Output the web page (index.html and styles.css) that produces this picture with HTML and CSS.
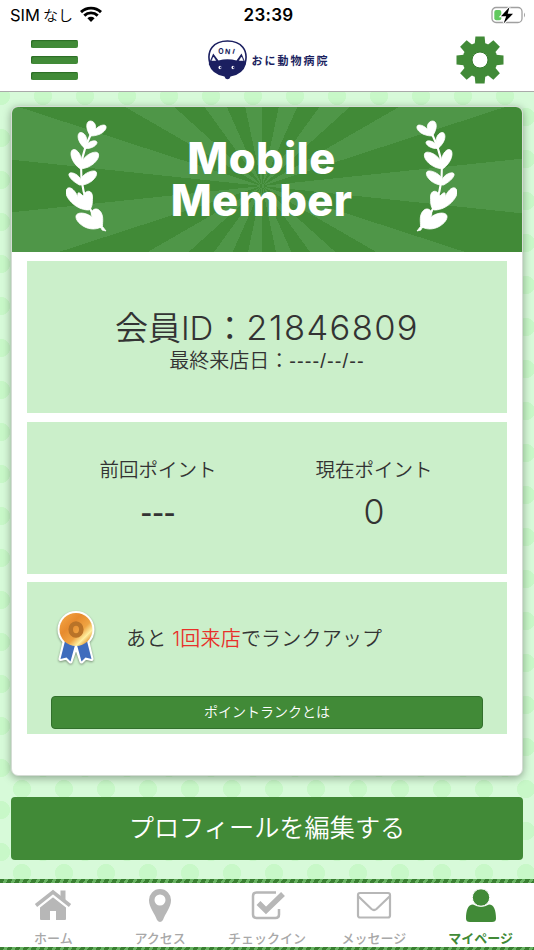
FILE: index.html
```html
<!DOCTYPE html>
<html lang="ja">

<head>
  <meta charset="utf-8">
  <title>マイページ</title>
  <meta name="viewport" content="width=device-width, initial-scale=1">
  <link rel="stylesheet" href="styles.css">
</head>

<body>
  <div class="status">
    <div class="carrier"><span class="latin">SIM</span><span class="nashi">なし</span>
      <svg width="22" height="17" viewBox="0 0 22 17">
        <path d="M1 6.1a14.5 14.5 0 0 1 20 0M4.3 9.6a9.7 9.7 0 0 1 13.4 0" fill="none" stroke="#000" stroke-width="2.9" />
        <path d="M11 16l3.6-3.7a5.2 5.2 0 0 0-7.2 0z" />
      </svg>
    </div>
    <div class="clock">23:39</div>
    <svg class="battery" width="36" height="18" viewBox="0 0 36 18">
      <rect x="1" y="1.5" width="30" height="15" rx="4" fill="#fff" stroke="#a0a0a0" stroke-width="1.3" />
      <path d="M33 6.5q2 2.5 0 5z" fill="#a0a0a0" />
      <rect x="3.3" y="4" width="7" height="10.3" rx="2" fill="#62c95f" />
      <path d="M18.500 1L10 10.200h5.200L12.600 17.500 22 7.700h-5.300z" stroke="#fff" stroke-width="2" paint-order="stroke" />
    </svg>
  </div>

  <header class="header">
    <div class="menu"><i></i><i></i><i></i></div>
    <div class="logo">
      <svg width="41" height="40" viewBox="0 0 41 40">
        <path d="M3 24C-1 10 7 1 20.500 1S42 10 38 24" fill="#fff" stroke="#1b1f60" stroke-width="1.600" />
        <path d="M1.700 24L6.200 13.500 11.500 20.500Q20.500 18 29.500 20.500L34.500 13.500 39 24Q36 34.500 23.500 36.500L22.500 38.500Q20.500 40 18.500 38.500L17.500 36.500Q5 34.500 1.700 24z" fill="#1b1f60" />
        <path d="M4.800 20.500L6.500 17l2.200 3.500zM36.200 20.500L34.500 17l-2.200 3.500z" fill="#fff" stroke="#fff" stroke-width=".5" />
        <ellipse cx="13" cy="27.500" rx="1.500" ry="1.700" fill="#fff" />
        <ellipse cx="26" cy="27.500" rx="1.500" ry="1.700" fill="#fff" />
        <circle cx="13.800" cy="27.500" r=".9" fill="#1b1f60" />
        <circle cx="26.800" cy="27.500" r=".9" fill="#1b1f60" />
        <g class="oni">
          <text x="11.300" y="14.200">O</text>
          <text x="18" y="14" transform="rotate(6 20 12)">N</text>
          <text x="25.500" y="14" transform="rotate(16 27 12)">I</text>
        </g>
      </svg>
      <span>おに動物病院</span>
    </div>
    <svg class="gear" width="48" height="48" viewBox="-24 -24 48 48">
      <defs>
        <path id="tooth" d="M-5.500-14L-4.600-23.500H4.600L5.500-14z" />
      </defs>
      <g fill="#418a37">
        <use href="#tooth" />
        <use href="#tooth" transform="rotate(45)" />
        <use href="#tooth" transform="rotate(90)" />
        <use href="#tooth" transform="rotate(135)" />
        <use href="#tooth" transform="rotate(180)" />
        <use href="#tooth" transform="rotate(225)" />
        <use href="#tooth" transform="rotate(270)" />
        <use href="#tooth" transform="rotate(315)" />
        <circle r="17.500" />
      </g>
      <circle r="8" fill="#fff" stroke="#347a2c" />
    </svg>
  </header>

  <main class="main">
    <div class="card">
      <div class="banner">
        <svg class="laurel" width="42" height="112" viewBox="0 0 42 112">
          <g id="branch">
            <path d="M25 14Q13 37 15.500 60T35 108" fill="none" stroke="#fff" stroke-width="2.200" />
            <path d="M24.500 16C19 8 20 1 24.500 1S32 8 27.500 13C30 6 39 3 40 6.500S35 16 24.500 16z
              M19 28.500C10 21 11 12 15 12.500S22 18 20.500 25C24 20 31 20 31 22.500S26 29 19 28.500z
              M14.500 49C4 42 3 30 7.500 29.500S16 37 16 43C17 35 31 29 32.500 34S26 48 14.500 49z
              M13.500 65C4 60 1 54 4 53S13 55 15 60C15 54 29 48 30.500 52.500S23 66 13.500 65z
              M22.500 90C9 90 -2 76 0 70.500S8 68 12 77C11 70 14 73 17 76C20 69 26.500 70 26.500 77S26 89 22.500 90z
              M35 107C24 113 11 104 10 97.500S21 92 27 98C22 92 29 86 33.500 90.500S36.500 101 36.500 106.500L40 111 36 110z" fill="#fff" stroke="#fff" stroke-width=".8" />
          </g>
        </svg>
        <h1>Mobile<br>Member</h1>
        <svg class="laurel" width="42" height="112" viewBox="0 0 42 112">
          <use href="#branch" transform="matrix(-1 0 0 1 42 0)" />
        </svg>
      </div>

      <div class="sections">
        <section class="box member">
          <p class="member-id">会員ID：<span>21846809</span></p>
          <p class="last-visit">最終来店日：<span>----/--/--</span></p>
        </section>

        <section class="box points">
          <div>
            <p class="label">前回ポイント</p>
            <p class="value dashes">---</p>
          </div>
          <div>
            <p class="label">現在ポイント</p>
            <p class="value">0</p>
          </div>
        </section>

        <section class="box rank">
          <div class="rank-row">
            <svg class="medal" width="40" height="54" viewBox="0 0 40 54">
              <defs>
                <linearGradient id="gold" x1="0" y1="0" x2="1" y2="1">
                  <stop offset="0" stop-color="#f7ab4a" />
                  <stop offset=".35" stop-color="#e78b2e" />
                  <stop offset=".6" stop-color="#efa443" />
                  <stop offset=".75" stop-color="#fff0a0" />
                  <stop offset=".85" stop-color="#e9a94a" />
                  <stop offset="1" stop-color="#dd8d35" />
                </linearGradient>
              </defs>
              <g stroke="#fff" stroke-width="4" stroke-linejoin="round">
                <path d="M9 29L4.500 48l6-1.500 4 4L20 34l5.500 16.500 4-4 6 1.500L31 29z" fill="#fff" />
                <circle cx="20" cy="18.500" r="16.500" />
              </g>
              <path d="M9 30L4.500 48l6-1.500 4 4L19.300 33zM31 30l4.500 18-6-1.500-4 4L20.700 33z" fill="#3f6cbd" />
              <circle cx="20" cy="18.500" r="16.500" fill="url(#gold)" />
              <ellipse cx="20" cy="18.500" rx="5.300" ry="6" fill="none" stroke="#b97328" stroke-width="4.600" />
            </svg>
            <p>あと <em>1回来店</em>でランクアップ</p>
          </div>
          <a class="rank-button">ポイントランクとは</a>
        </section>
      </div>
    </div>

    <a class="edit-button">プロフィールを編集する</a>
  </main>

  <nav class="tabs">
    <a>
      <svg width="38" height="34" viewBox="0 0 38 34">
        <path d="M2 16.500L19 3 36 16.500" fill="none" stroke="#b7b7b7" stroke-width="3.600" />
        <path d="M26.500 1.500h5v10l-5-4zM6 17.500L19 7.500 32 17.500V30q0 1-1 1H22v-9h-6v9H7q-1 0-1-1z" fill="#b7b7b7" />
        <path d="M5 18.500L19 7.600 33 18.500" fill="none" stroke="#fff" stroke-width="1.300" />
      </svg>
      ホーム</a>
    <a>
      <svg width="24" height="34" viewBox="0 0 24 34">
        <path d="M12 0A11 11 0 0 0 1 11.500C1 18 7 25 9 31q3 4 6 0c2-6 8-13 8-19.500A11 11 0 0 0 12 0zm0 5.500a5.500 5.500 0 1 1 0 11 5.500 5.500 0 0 1 0-11z" fill="#b7b7b7" fill-rule="evenodd" />
      </svg>
      アクセス</a>
    <a class="checkin">
      <svg width="36" height="34" viewBox="0 0 36 34">
        <path d="M26 3.500H6.500Q3 3.500 3 7v18.500Q3 29 6.500 29h19q3.500 0 3.500-3.500V20" fill="none" stroke="#b7b7b7" stroke-width="2.500" />
        <path d="M8.500 14l7.500 7.500L33 5" fill="none" stroke="#b7b7b7" stroke-width="5.500" />
      </svg>
      チェックイン</a>
    <a>
      <svg width="36" height="34" viewBox="0 0 36 34">
        <rect x="2" y="4" width="32" height="24.500" rx="2" fill="none" stroke="#b7b7b7" stroke-width="2.200" />
        <path d="M2.500 7.500L15.500 20q2.500 2 5 0L33.500 7.500" fill="none" stroke="#b7b7b7" stroke-width="2.200" />
      </svg>
      メッセージ</a>
    <a class="active">
      <svg width="32" height="34" viewBox="0 0 32 34">
        <path d="M8 15.500q8 4.500 16 0c5 0 7 6 7 14q0 3.500-4 3.500H5q-4 0-4-3.500c0-8 2-14 7-14z" fill="#418a37" />
        <circle cx="16" cy="8.500" r="8.700" fill="#418a37" stroke="#fff" />
      </svg>
      マイページ</a>
  </nav>
</body>

</html>
```
FILE: styles.css
```css
* {
  margin: 0;
  padding: 0;
  box-sizing: border-box;
}

body {
  width: 534px;
  height: 950px;
  overflow: hidden;
  display: flex;
  flex-direction: column;
  font-family: Inter, "Noto Sans CJK JP", sans-serif;
  color: #333;
  background: #fff;
}

.status {
  height: 30px;
  display: grid;
  grid-template-columns: 1fr auto 1fr;
  align-items: center;
  padding: 0 7px 1px 10px;
  color: #000;
}

.carrier {
  display: flex;
  align-items: center;
  font-size: 16.5px;
}

.nashi {
  font-size: 15px;
  font-weight: 350;
  margin: 0 7px 0 3px;
}

.clock {
  font-size: 17px;
  font-weight: 600;
  letter-spacing: 0.3px;
}

.battery {
  justify-self: end;
}

.header {
  height: 62px;
  display: flex;
  justify-content: space-between;
  align-items: center;
  padding: 0 30px 2px 31px;
  border-bottom: 1px solid #aaa;
}

.menu {
  width: 47px;
  display: flex;
  flex-direction: column;
  gap: 8px;
}

.menu i {
  height: 8px;
  border-radius: 2px;
  background: #418a37;
  box-shadow: inset 1px 1px 1px #2c6c25;
}

.logo {
  display: flex;
  align-items: center;
  gap: 4px;
  margin-left: 2px;
  color: #1b1f60;
  font-size: 11px;
  font-weight: 700;
  letter-spacing: 2px;
}

.oni text {
  font: 700 7px Inter, sans-serif;
  letter-spacing: 0;
  fill: #1b1f60;
}

.main {
  height: 787px;
  padding: 14px 11px 0;
  background-color: #d7fad9;
  background-image: radial-gradient(circle, #c8f8c8 8.8px, transparent 9.3px), radial-gradient(circle, #c8f8c8 8.8px, transparent 9.3px);
  background-size: 42px 42px;
  background-position: -20px -17px, 1px 4px;
}

.card {
  height: 670px;
  border: 1px solid #d4dcd4;
  border-radius: 7px;
  background: #fff;
  box-shadow: 0 2px 9px rgba(0, 0, 0, 0.35);
  overflow: hidden;
}

.banner {
  height: 145px;
  display: flex;
  justify-content: space-between;
  padding: 13px 65px 0 54px;
  background: repeating-conic-gradient(from 84deg at 250px 79px, #4f9648 0 12deg, #418a37 12deg 24deg);
}

.banner h1 {
  padding-top: 17px;
  font-size: 43.5px;
  line-height: 42px;
  font-weight: 800;
  letter-spacing: 0.3px;
  color: #fff;
  text-align: center;
}

.sections {
  display: flex;
  flex-direction: column;
  gap: 9px;
  padding: 9px 15px;
}

.box {
  height: 152px;
  background: #cbefca;
}

.box + .box {
  margin-top: -0.5px;
}

.member {
  padding-top: 44px;
  text-align: center;
}

.member-id {
  font-size: 33px;
  line-height: 46px;
  font-weight: 350;
}

.member-id span {
  font-size: 34.5px;
  font-weight: 300;
  letter-spacing: 1.4px;
}

.last-visit {
  font-size: 20px;
  line-height: 20px;
  font-weight: 350;
}

.last-visit span {
  font-family: "Liberation Sans", sans-serif;
  letter-spacing: 1.1px;
}

.points {
  display: grid;
  grid-template-columns: 216px 216px;
  justify-content: center;
  padding: 33px 2px 0 0;
  text-align: center;
}

.label {
  font-size: 19.5px;
  line-height: 30px;
  font-weight: 350;
}

.value {
  font-size: 34px;
  line-height: 54px;
  font-weight: 300;
}

.dashes {
  font-family: "Liberation Sans", sans-serif;
  font-size: 35px;
}

.rank {
  padding: 28px 24px 0;
}

.rank-row {
  height: 86px;
  display: flex;
  align-items: flex-start;
  gap: 30px;
  padding: 1px 0 0 5px;
  font-size: 20px;
  line-height: 57px;
  font-weight: 350;
  letter-spacing: 0.2px;
}

.rank-row em {
  font-style: normal;
  color: #e8302a;
}

.medal {
  filter: drop-shadow(0 1px 1px rgba(0, 0, 0, 0.4));
}

.rank-button {
  display: block;
  height: 33px;
  border: 1px solid #32702c;
  border-radius: 4px;
  background: #418a37;
  color: #fff;
  font-size: 14px;
  line-height: 30px;
  font-weight: 350;
  text-align: center;
}

.edit-button {
  display: block;
  height: 63px;
  margin-top: 21px;
  border-radius: 4px;
  background: #418a37;
  color: #fff;
  font-size: 25.2px;
  line-height: 63px;
  font-weight: 350;
  text-align: center;
}

.tabs {
  height: 71px;
  display: grid;
  grid-template-columns: repeat(5, 1fr);
  padding-top: 10px;
  background:
    repeating-linear-gradient(120deg, #397f31 0 4px, #69b363 4px 7px) top / 100% 4px no-repeat,
    repeating-linear-gradient(120deg, #397f31 0 4px, #69b363 4px 7px) bottom / 100% 3px no-repeat,
    #fff;
}

.tabs a {
  display: flex;
  flex-direction: column;
  align-items: center;
  font-size: 13px;
  line-height: 31px;
  font-weight: 500;
  color: #a8a8a8;
  white-space: nowrap;
}

.tabs svg {
  flex: none;
}

.checkin svg {
  margin-left: 2px;
}

.tabs .active {
  font-weight: 700;
  color: #418a37;
}
```
